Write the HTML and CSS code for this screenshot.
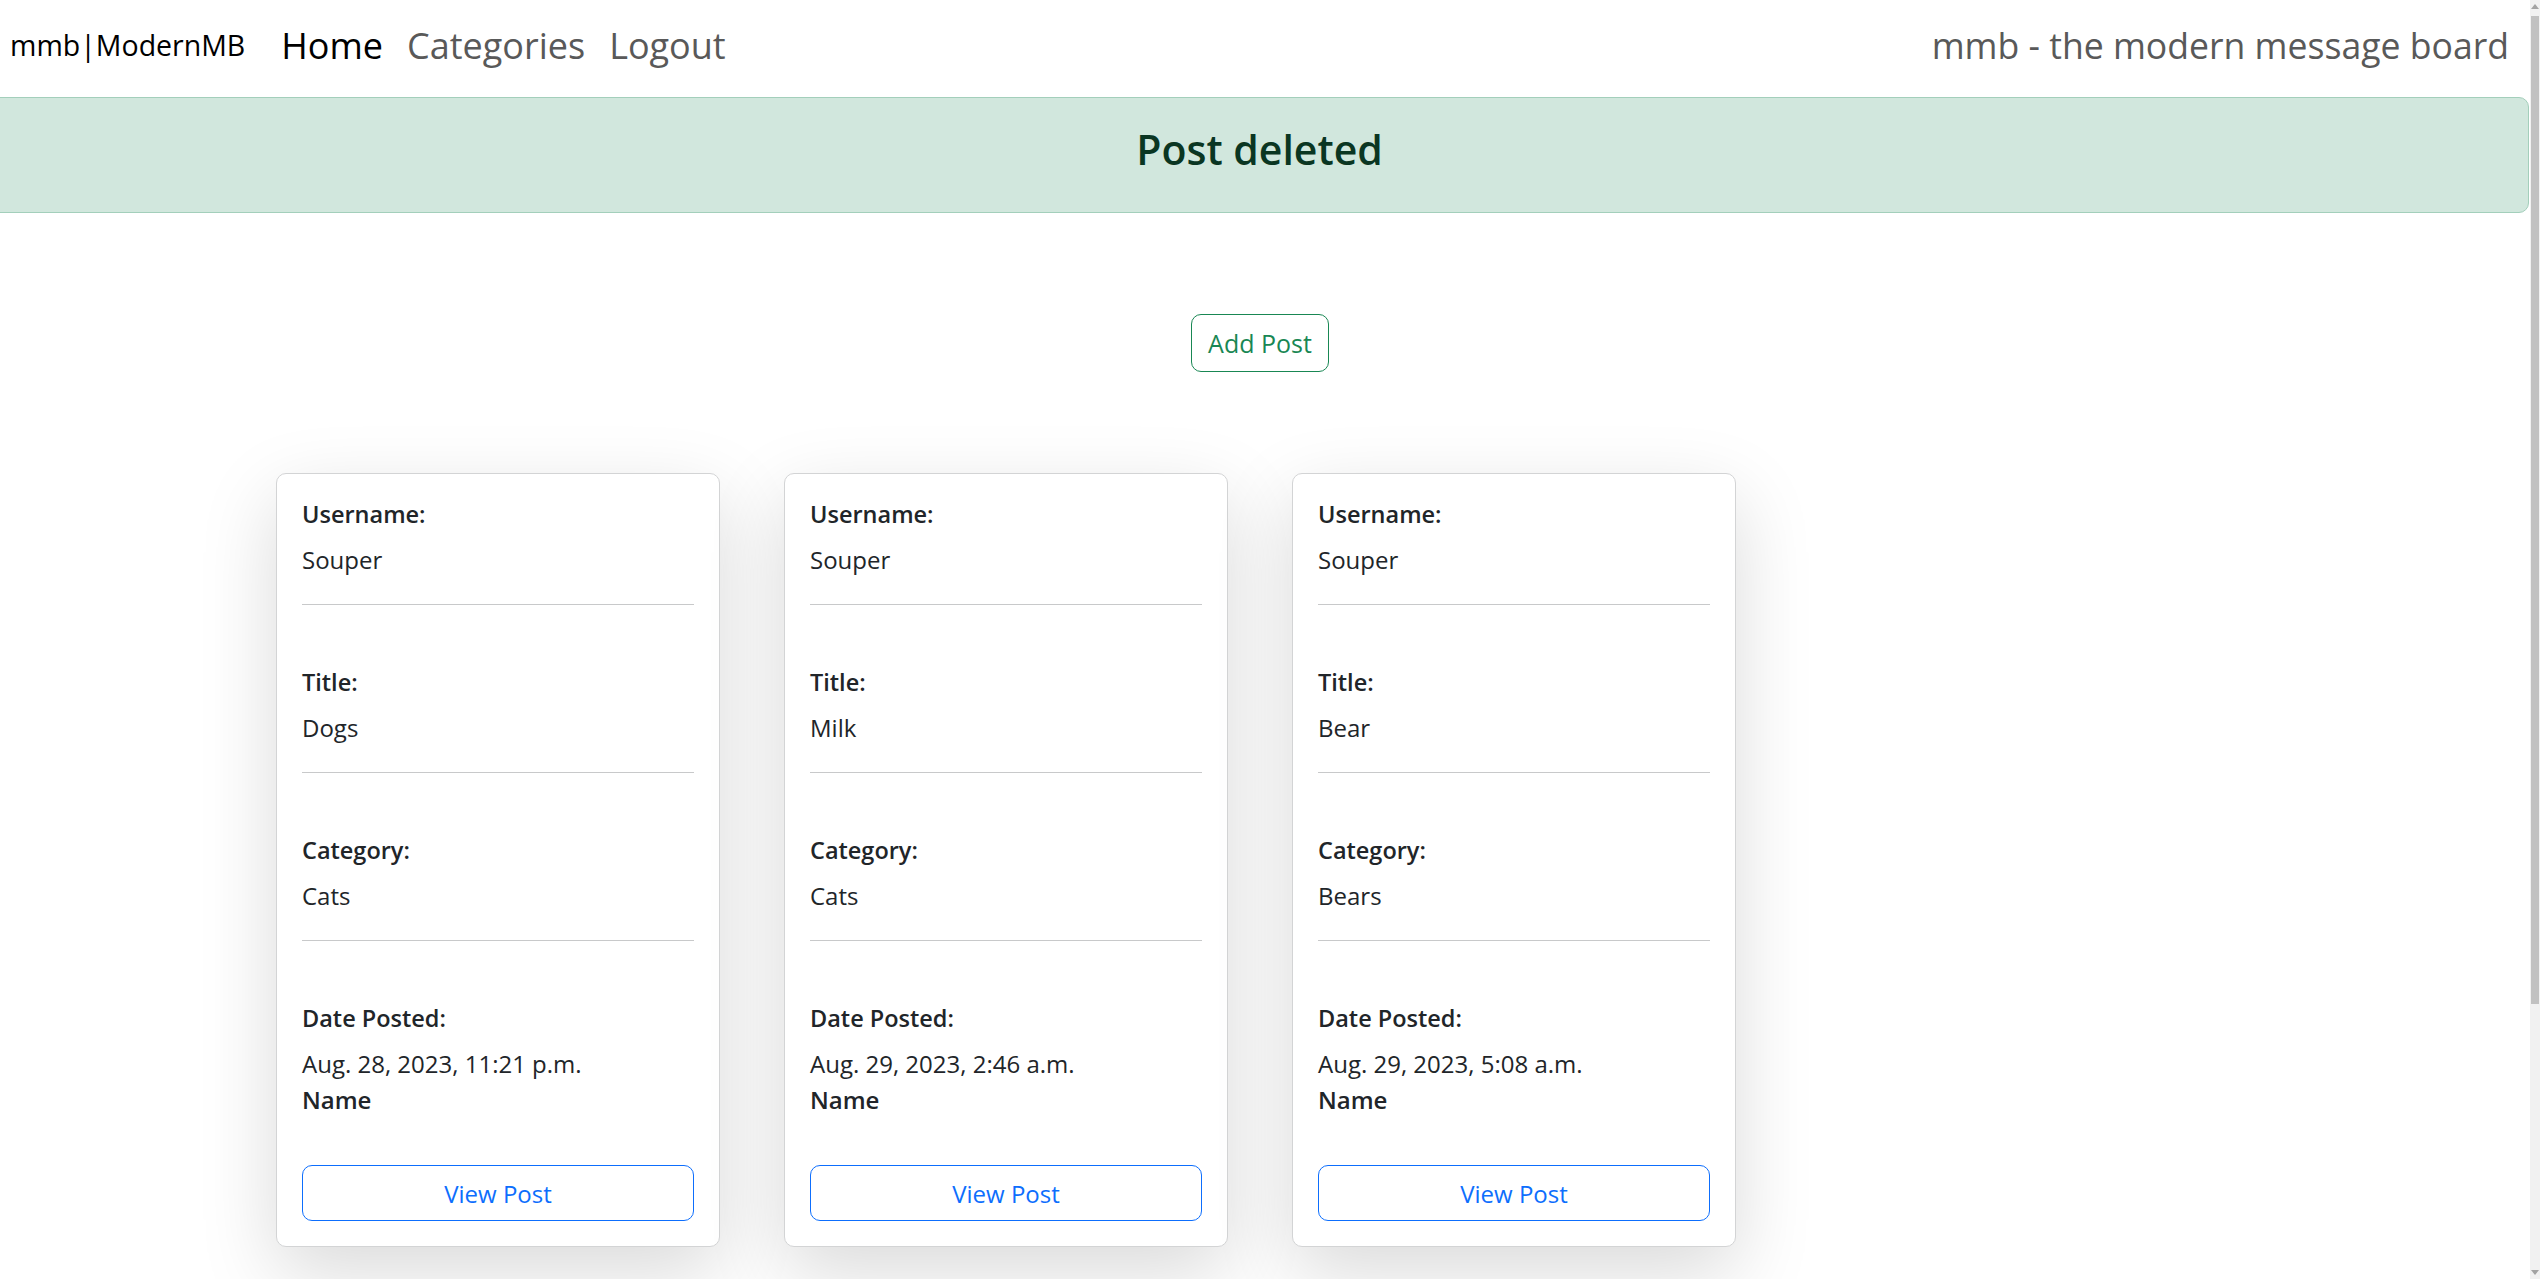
FILE: index.html
```html
<!DOCTYPE html>
<html lang="en">
<head>
<meta charset="utf-8">
<title>mmb - the modern message board</title>
<link rel="stylesheet" href="styles.css">
</head>
<body>
<div class="window">
  <div class="page">
    <nav class="navbar">
      <a class="brand" href="#">mmb|ModernMB</a>
      <ul class="nav-links">
        <li><a class="nav-link active" href="#">Home</a></li>
        <li><a class="nav-link" href="#">Categories</a></li>
        <li><a class="nav-link" href="#">Logout</a></li>
      </ul>
      <span class="tagline">mmb - the modern message board</span>
    </nav>

    <div class="alert">
      <h2 class="alert-title">Post deleted</h2>
    </div>

    <div class="actions">
      <a class="btn btn-green" href="#">Add Post</a>
    </div>

    <div class="grid">
      <div class="card">
        <h6 class="label">Username:</h6>
        <p class="value">Souper</p>
        <hr class="sep">
        <h6 class="label">Title:</h6>
        <p class="value">Dogs</p>
        <hr class="sep">
        <h6 class="label">Category:</h6>
        <p class="value">Cats</p>
        <hr class="sep">
        <h6 class="label">Date Posted:</h6>
        <p class="value date">Aug. 28, 2023, 11:21 p.m.</p>
        <p class="name">Name</p>
        <a class="btn btn-blue" href="#">View Post</a>
      </div>
      <div class="card">
        <h6 class="label">Username:</h6>
        <p class="value">Souper</p>
        <hr class="sep">
        <h6 class="label">Title:</h6>
        <p class="value">Milk</p>
        <hr class="sep">
        <h6 class="label">Category:</h6>
        <p class="value">Cats</p>
        <hr class="sep">
        <h6 class="label">Date Posted:</h6>
        <p class="value date">Aug. 29, 2023, 2:46 a.m.</p>
        <p class="name">Name</p>
        <a class="btn btn-blue" href="#">View Post</a>
      </div>
      <div class="card">
        <h6 class="label">Username:</h6>
        <p class="value">Souper</p>
        <hr class="sep">
        <h6 class="label">Title:</h6>
        <p class="value">Bear</p>
        <hr class="sep">
        <h6 class="label">Category:</h6>
        <p class="value">Bears</p>
        <hr class="sep">
        <h6 class="label">Date Posted:</h6>
        <p class="value date">Aug. 29, 2023, 5:08 a.m.</p>
        <p class="name">Name</p>
        <a class="btn btn-blue" href="#">View Post</a>
      </div>
    </div>
  </div>

  <div class="scrollbar">
    <span class="arrow arrow-up"></span>
    <div class="track">
      <div class="thumb"></div>
    </div>
    <span class="arrow arrow-down"></span>
  </div>
</div>
</body>
</html>
```

FILE: styles.css
```css
html, body {
  margin: 0;
  padding: 0;
  height: 100%;
  overflow: hidden;
  background: #fff;
}

body {
  font-family: "Open Sans", "Noto Sans", sans-serif;
  font-size: 24px;
  color: #212529;
}

.window {
  display: flex;
  height: 1279px;
}

.page {
  flex: 1;
  min-width: 0;
  padding-right: 10px;
  overflow: hidden;
}

/* navbar */
.navbar {
  height: 97px;
  display: flex;
  align-items: center;
  padding: 0 11px 7px 10px;
  box-sizing: border-box;
}

.brand {
  font-size: 28.5px;
  color: #000;
  text-decoration: none;
  margin-right: 24px;
}

.nav-links {
  display: flex;
  list-style: none;
  margin: 0;
  padding: 0;
  flex: 1;
}

.nav-link {
  display: block;
  font-size: 36px;
  color: #595959;
  text-decoration: none;
  padding: 0 12px;
}

.nav-link.active {
  color: #000;
}

.tagline {
  font-size: 35.6px;
  color: #595959;
}

/* alert */
.alert {
  height: 116px;
  margin-left: -10px;
  margin-right: -9px;
  padding-bottom: 12px;
  background: #d1e7dd;
  border: 1px solid #a3cfbb;
  border-radius: 10px;
  box-sizing: border-box;
  display: flex;
  align-items: center;
  justify-content: center;
}

.alert-title {
  margin: 0;
  font-size: 41px;
  font-weight: 600;
  color: #0a3622;
}

/* buttons */
.actions {
  display: flex;
  justify-content: center;
  padding: 101px 0;
}

.btn {
  display: inline-flex;
  align-items: center;
  justify-content: center;
  box-sizing: border-box;
  border-radius: 10px;
  text-decoration: none;
  font-size: 24px;
  background: #fff;
}

.btn-green {
  width: 138px;
  height: 58px;
  border: 1px solid #198754;
  color: #198754;
  font-size: 25px;
}

.btn-blue {
  width: 100%;
  height: 56px;
  border: 1px solid #0d6efd;
  color: #0d6efd;
  margin-top: 47px;
}

/* cards */
.grid {
  width: 1968px;
  margin: 0 auto;
  display: grid;
  grid-template-columns: repeat(4, 444px);
  column-gap: 64px;
}

.card {
  border: 1px solid #d3d4d5;
  border-radius: 10px;
  padding: 26px 25px 25px;
  background: #fff;
  box-shadow: 0 26px 78px rgba(0, 0, 0, 0.15);
  display: flex;
  flex-direction: column;
}

.label {
  margin: 0 0 13px;
  font-size: 23.5px;
  font-weight: 600;
  line-height: 29px;
  color: #212529;
}

.value {
  margin: 0 0 26px;
  line-height: 36px;
}

.value.date {
  margin-bottom: 0;
}

.sep {
  margin: 0 0 63px;
  border: 0;
  border-top: 1px solid #c8c9ca;
  height: 0;
}

.name {
  margin: 0;
  font-weight: 600;
  line-height: 36px;
}

/* fake scrollbar */
.scrollbar {
  width: 10px;
  flex: 0 0 10px;
  background: #f1f1f1;
  display: flex;
  flex-direction: column;
  align-items: center;
}

.arrow {
  width: 0;
  height: 0;
  border-left: 4px solid transparent;
  border-right: 4px solid transparent;
  margin: 4px 0;
}

.arrow-up {
  border-bottom: 5px solid #a3a3a3;
}

.arrow-down {
  border-top: 5px solid #a3a3a3;
}

.track {
  flex: 1;
  width: 100%;
  display: flex;
  justify-content: center;
}

.thumb {
  width: 8px;
  height: 988px;
  margin-top: 3px;
  background: #c1c1c1;
}
```
